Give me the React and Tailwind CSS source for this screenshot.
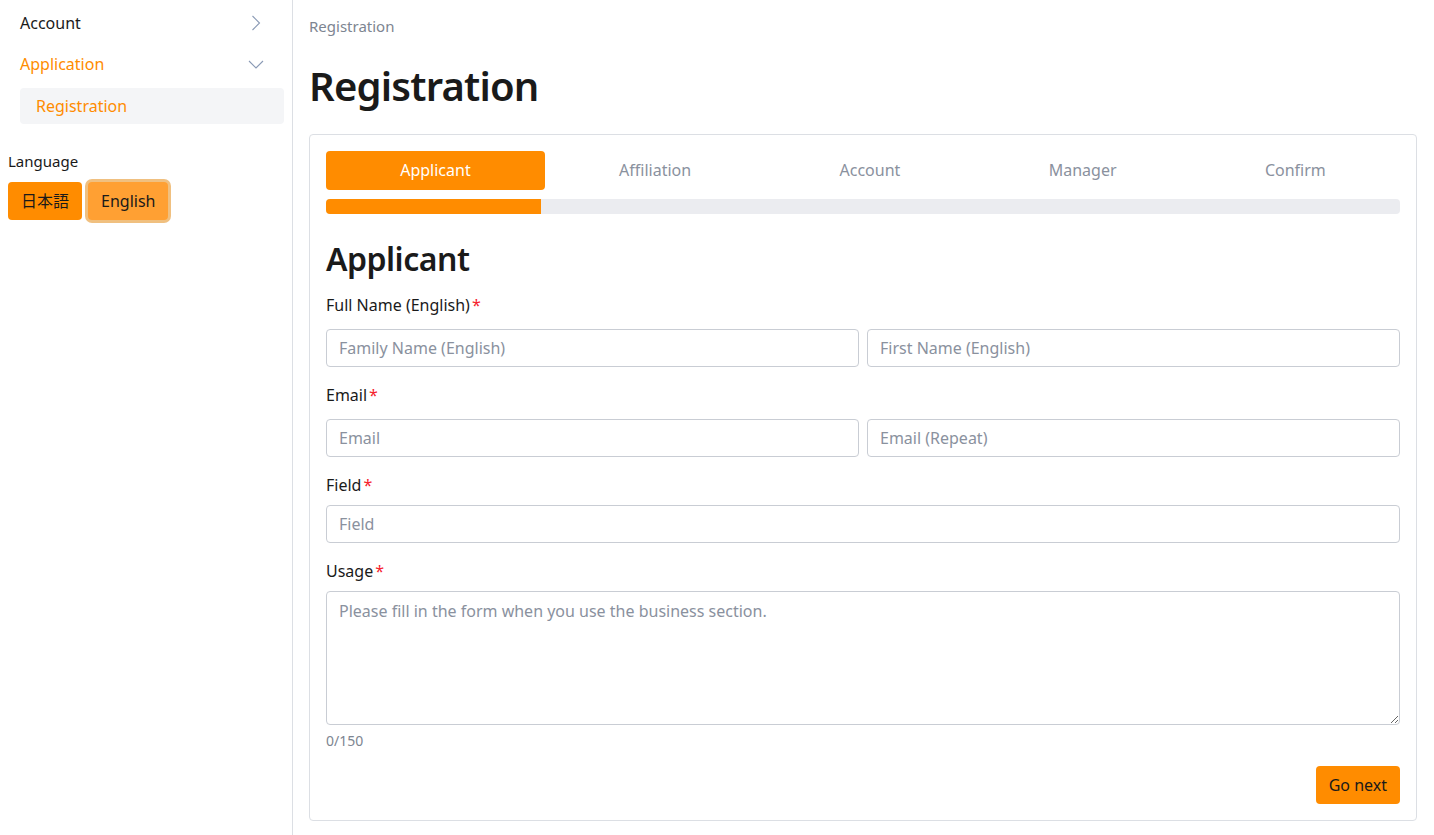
const steps = ['Applicant', 'Affiliation', 'Account', 'Manager', 'Confirm'];

const Label = ({ children }) => (
  <div className="text-[16px] text-[#1a1a1a] leading-5">
    {children}
    <span className="text-[#f5222d] ml-0.5">*</span>
  </div>
);

const Input = ({ placeholder }) => (
  <input
    type="text"
    placeholder={placeholder}
    className="h-[38px] w-full rounded border border-[#c9cdd4] px-3 text-[16px] outline-none placeholder:text-[#8a919e]"
  />
);

const App = () => {
  return (
    <div className="flex min-h-[835px] bg-white text-[#1a1a1a]" style={{ fontFamily: '"Noto Sans", "Noto Sans CJK JP", sans-serif' }}>
      <aside className="w-[293px] shrink-0 border-r border-[#dcdfe4] pt-[9px]">
        <div className="flex h-[27px] items-center justify-between pl-5 pr-[28px] text-[16px]">
          <span>Account</span>
          <span className="flex w-4 justify-center">
            <svg width="10" height="16" viewBox="0 0 10 16" fill="none" stroke="#8a9ab5" strokeWidth="1.1">
              <path d="M1.5 1 L8.5 8 L1.5 15" />
            </svg>
          </span>
        </div>
        <div className="mt-[14px] flex h-[27px] items-center justify-between pl-5 pr-[28px] text-[16px] text-[#ff8c00]">
          <span>Application</span>
          <span className="flex w-4 justify-center">
            <svg width="16" height="10" viewBox="0 0 16 10" fill="none" stroke="#8a9ab5" strokeWidth="1.1">
              <path d="M1 2 L8 9 L15 2" />
            </svg>
          </span>
        </div>
        <div className="ml-5 mr-2 mt-[11px] flex h-9 items-center rounded bg-[#f4f5f7] pl-4 text-[16px] text-[#ff8c00]">
          Registration
        </div>
        <div className="mt-[26px] pl-2 text-[15px]">Language</div>
        <div className="mt-[9px] flex gap-[6px] pl-2">
          <button className="h-[38px] rounded bg-[#ff8c00] px-[13px] text-[16px]">日本語</button>
          <button className="h-[38px] rounded bg-[#ffa033] px-[13px] text-[16px] ring-[3px] ring-[#f0c080]">English</button>
        </div>
      </aside>

      <main className="flex-1 pl-4 pr-[17px] pt-[15px]">
        <div className="text-[15px] text-[#7d8591]">Registration</div>
        <h1 className="mt-[24px] text-[40px] font-semibold leading-[48px] tracking-[-0.8px]">Registration</h1>
        <div className="mt-[24px] rounded border border-[#dcdfe4] p-4 pb-4">
          <div className="flex">
            {steps.map((s, i) => (
              <div
                key={s}
                className={
                  i === 0
                    ? 'flex h-[39px] flex-auto items-center justify-center rounded bg-[#ff8c00] px-2 text-[16px] text-white'
                    : 'flex h-[39px] flex-auto items-center justify-center px-2 text-[16px] text-[#8a919e]'
                }
              >
                {s}
              </div>
            ))}
          </div>
          <div className="mt-[9px] h-[15px] overflow-hidden rounded bg-[#ebecf0]">
            <div className="h-full w-[20%] bg-[#ff8c00]" />
          </div>

          <h2 className="mt-[26px] text-[32px] font-semibold leading-[38px] tracking-[-0.5px]">Applicant</h2>

          <div className="mt-[17px]">
            <Label>Full Name (English)</Label>
            <div className="mt-[14px] flex gap-2">
              <Input placeholder="Family Name (English)" />
              <Input placeholder="First Name (English)" />
            </div>
          </div>

          <div className="mt-[18px]">
            <Label>Email</Label>
            <div className="mt-[14px] flex gap-2">
              <Input placeholder="Email" />
              <Input placeholder="Email (Repeat)" />
            </div>
          </div>

          <div className="mt-[18px]">
            <Label>Field</Label>
            <div className="mt-[10px]">
              <Input placeholder="Field" />
            </div>
          </div>

          <div className="mt-[18px]">
            <Label>Usage</Label>
            <textarea
              placeholder="Please fill in the form when you use the business section."
              className="mt-[10px] block h-[134px] w-full rounded border border-[#c9cdd4] px-3 py-[7px] text-[16px] outline-none placeholder:text-[#8a919e]"
            />
            <div className="mt-[6px] text-[14px] leading-5 text-[#7d8591]">0/150</div>
          </div>

          <div className="mt-[15px] flex justify-end">
            <button className="h-[38px] rounded bg-[#ff8c00] px-[13px] text-[16px]">Go next</button>
          </div>
        </div>
      </main>
    </div>
  );
};

export default App;
